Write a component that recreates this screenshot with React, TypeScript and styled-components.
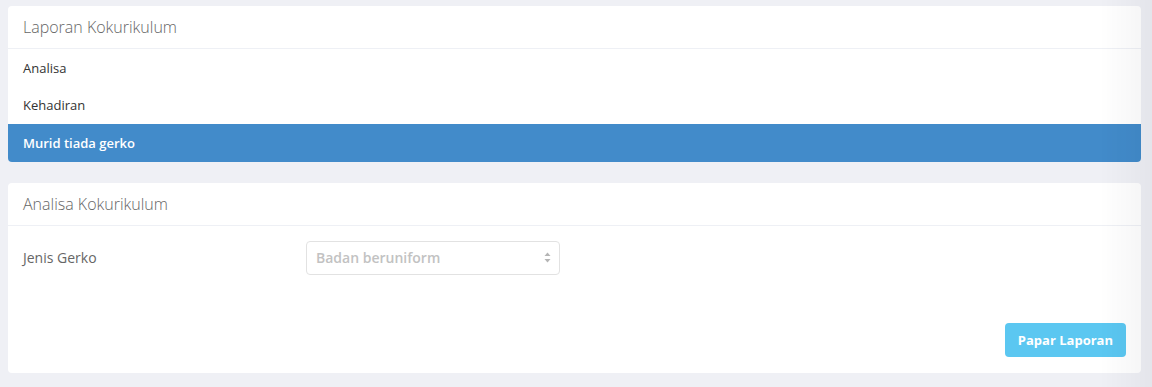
import React from "react";
import styled, { createGlobalStyle } from "styled-components";

const GlobalStyle = createGlobalStyle`
  body {
    margin: 0;
    background: #eff0f5;
    font-family: "Open Sans", "Liberation Sans", sans-serif;
  }
  * { box-sizing: border-box; }
`;

const Page = styled.div`
  position: relative;
  padding: 6px 11px 15px 8px;
  display: flex;
  flex-direction: column;
  gap: 21px;
  min-height: 387px;

  /* soft shade along the right edge */
  &::after {
    content: "";
    position: fixed;
    top: 0;
    right: 0;
    bottom: 0;
    width: 52px;
    pointer-events: none;
    background: linear-gradient(to right, rgba(0, 0, 0, 0), rgba(0, 0, 20, 0.045));
  }
`;

const Panel = styled.section`
  background: #fff;
  border-radius: 4px;
  overflow: hidden;
`;

const PanelHeading = styled.div`
  height: 43px;
  padding: 0 15px;
  display: flex;
  align-items: center;
  border-bottom: 1px solid #eef0f5;
  font-size: 16px;
  font-weight: 300;
  color: #666;
`;

const NavList = styled.ul`
  list-style: none;
  margin: 0;
  padding: 0;
`;

const NavItem = styled.li<{ $active?: boolean }>`
  height: 37.67px;
  padding: 0 15px;
  display: flex;
  align-items: center;
  font-size: 13px;
  font-weight: ${(p) => (p.$active ? 600 : 400)};
  color: ${(p) => (p.$active ? "#fff" : "#333")};
  background: ${(p) => (p.$active ? "#428bca" : "transparent")};
`;

const PanelBody = styled.div`
  padding: 15px 15px 16px 15px;
`;

const FormRow = styled.div`
  display: grid;
  grid-template-columns: 283px 254px;
  align-items: center;
`;

const Label = styled.label`
  font-size: 14px;
  color: #666;
`;

const SelectBox = styled.div`
  height: 34px;
  border: 1px solid #e2e2e2;
  border-radius: 4px;
  padding: 0 8px 0 9px;
  display: flex;
  align-items: center;
  justify-content: space-between;
  font-size: 14px;
  font-weight: 600;
  color: #c2c2c2;
`;

const Arrows = styled.svg`
  width: 7px;
  height: 11px;
`;

const Actions = styled.div`
  display: flex;
  justify-content: flex-end;
  margin-top: 48px;
`;

const Button = styled.button`
  height: 34px;
  padding: 0 13px;
  border: none;
  border-radius: 4px;
  background: #5bc7f1;
  color: #fff;
  font-family: inherit;
  font-size: 13px;
  font-weight: 700;
`;

export default function App() {
  return (
    <>
      <GlobalStyle />
      <Page>
        <Panel>
          <PanelHeading>Laporan Kokurikulum</PanelHeading>
          <NavList>
            <NavItem>Analisa</NavItem>
            <NavItem>Kehadiran</NavItem>
            <NavItem $active>Murid tiada gerko</NavItem>
          </NavList>
        </Panel>
        <Panel>
          <PanelHeading>Analisa Kokurikulum</PanelHeading>
          <PanelBody>
            <FormRow>
              <Label>Jenis Gerko</Label>
              <SelectBox>
                Badan beruniform
                <Arrows viewBox="0 0 7 11">
                  <path d="M3.5 0.5 L6.5 4 H0.5 Z" fill="#b5b5b5" />
                  <path d="M3.5 10.5 L6.5 7 H0.5 Z" fill="#b5b5b5" />
                </Arrows>
              </SelectBox>
            </FormRow>
            <Actions>
              <Button>Papar Laporan</Button>
            </Actions>
          </PanelBody>
        </Panel>
      </Page>
    </>
  );
}
